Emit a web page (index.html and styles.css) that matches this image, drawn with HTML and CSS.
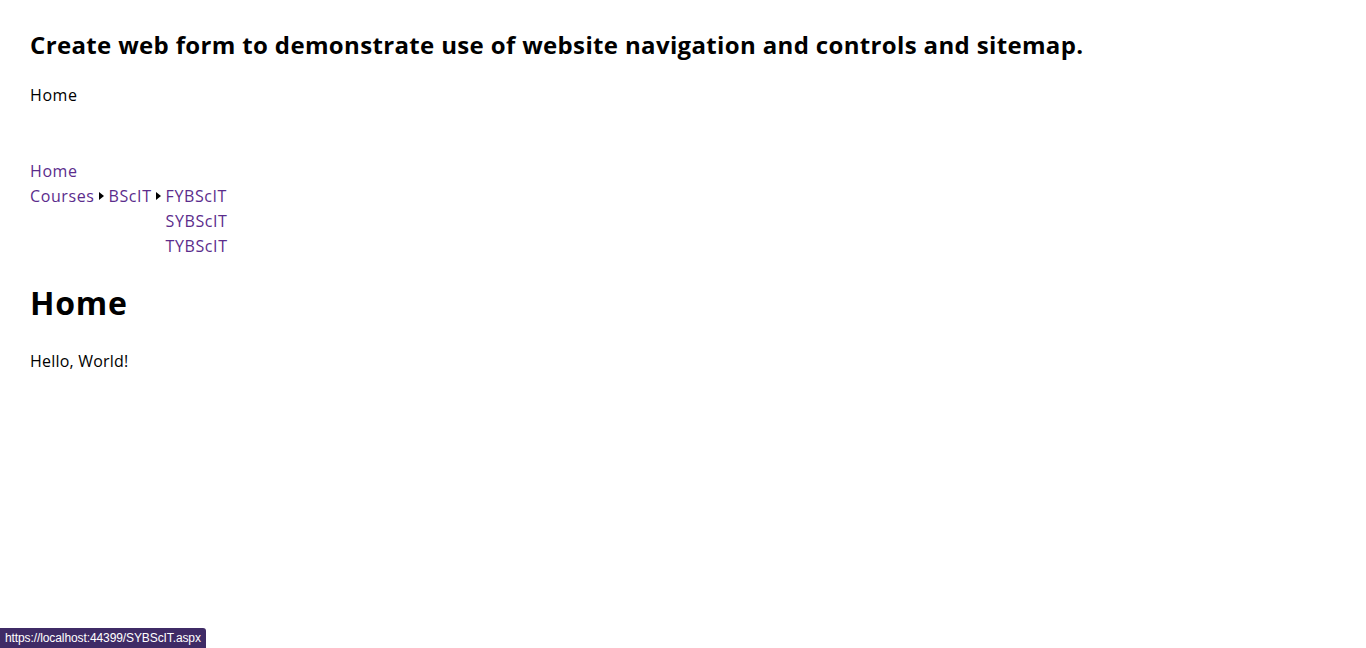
FILE: index.html
```html
<!DOCTYPE html>
<html>
<head>
<meta charset="utf-8">
<title>Home</title>
<link rel="stylesheet" href="styles.css">
</head>
<body>
<h1 class="title">Create web form to demonstrate use of website navigation and controls and sitemap.</h1>
<div class="crumb"><span>Home</span></div>
<nav class="menu">
  <div class="row"><a href="#" class="item">Home</a></div>
  <div class="row">
    <div class="level">
      <a href="#" class="item">Courses<span class="arrow"></span></a>
    </div>
    <div class="level">
      <a href="#" class="item">BScIT<span class="arrow"></span></a>
    </div>
    <div class="level">
      <a href="#" class="item">FYBScIT</a>
      <a href="#" class="item">SYBScIT</a>
      <a href="#" class="item">TYBScIT</a>
    </div>
  </div>
</nav>
<h2 class="page-title">Home</h2>
<p class="content">Hello, World!</p>
<div class="status">https://localhost:44399/SYBScIT.aspx</div>
</body>
</html>
```
FILE: styles.css
```css
html, body {
  margin: 0;
  background: #ffffff;
}
body {
  padding: 0 30px;
  font-family: "Open Sans", "Noto Sans", sans-serif;
  font-size: 16px;
  letter-spacing: 0.6px;
  color: #000000;
}
.title {
  margin: 27px 0 0;
  font-size: 24px;
  line-height: 36px;
  font-weight: 700;
  letter-spacing: 0.35px;
}
.crumb {
  margin-top: 20px;
  line-height: 24px;
}
.menu {
  margin-top: 51px;
}
.row {
  display: flex;
  align-items: flex-start;
}
.level {
  display: flex;
  flex-direction: column;
}
.item {
  display: flex;
  align-items: center;
  height: 25px;
  color: #5b2c8c;
  text-decoration: none;
}
.arrow {
  display: inline-block;
  width: 0;
  height: 0;
  margin: 0 5px 0 4px;
  border-top: 4px solid transparent;
  border-bottom: 4px solid transparent;
  border-left: 5px solid #000000;
}
.page-title {
  margin: 21px 0 0;
  font-size: 32px;
  line-height: 48px;
  font-weight: 700;
  letter-spacing: 0.75px;
}
.content {
  margin: 22px 0 0;
  line-height: 24px;
  letter-spacing: 0.2px;
}
.status {
  position: fixed;
  left: 0;
  bottom: 0;
  height: 20px;
  padding: 0 5px;
  line-height: 20px;
  background: #3f2b66;
  color: #ffffff;
  font-family: "Liberation Sans", sans-serif;
  font-size: 12px;
  letter-spacing: -0.1px;
  border-top-right-radius: 3px;
}
```
